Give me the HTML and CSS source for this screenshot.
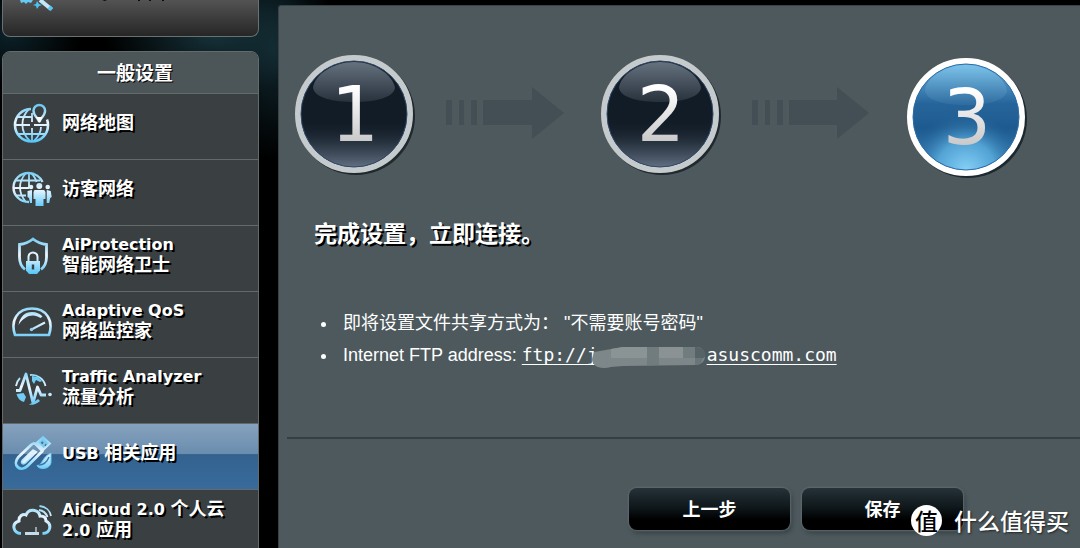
FILE: index.html
```
<!DOCTYPE html>
<html lang="zh-CN">
<head>
<meta charset="utf-8">
<title>USB 相关应用</title>
<link rel="stylesheet" href="styles.css">
</head>
<body>
<svg class="defs" aria-hidden="true">
  <defs>
    <linearGradient id="ice" x1="0" y1="0" x2="0" y2="40" gradientUnits="userSpaceOnUse">
      <stop offset="0" stop-color="#5cc4f0"/><stop offset=".5" stop-color="#eef7ff"/><stop offset="1" stop-color="#4cc3f7"/>
    </linearGradient>
    <linearGradient id="digit" x1="0" y1="0" x2="0" y2="1">
      <stop offset=".2" stop-color="#fff"/><stop offset="1" stop-color="#b9b7b9"/>
    </linearGradient>
    <linearGradient id="darkGlow" x1="0" y1="0" x2="0" y2="1">
      <stop offset=".55" stop-color="#111c27" stop-opacity="0"/><stop offset=".8" stop-color="#36424f" stop-opacity=".8"/><stop offset="1" stop-color="#626f82"/>
    </linearGradient>
    <linearGradient id="darkGloss" x1="0" y1="0" x2="0" y2="1">
      <stop offset="0" stop-color="#7c8795"/><stop offset="1" stop-color="#2c3742"/>
    </linearGradient>
    <linearGradient id="blueBall" x1="0" y1="0" x2="0" y2="1">
      <stop offset="0" stop-color="#6fbbe6"/><stop offset=".38" stop-color="#26659b"/><stop offset=".6" stop-color="#1d5a8f"/><stop offset="1" stop-color="#3c86bb"/>
    </linearGradient>
    <radialGradient id="blueGlow" cx=".5" cy="1" r=".55">
      <stop offset="0" stop-color="#85d0f6"/><stop offset=".5" stop-color="#5cafe0" stop-opacity=".8"/><stop offset="1" stop-color="#1f5f95" stop-opacity="0"/>
    </radialGradient>
    <linearGradient id="blueGloss" x1="0" y1="0" x2="0" y2="1">
      <stop offset="0" stop-color="#8fd3f5"/><stop offset="1" stop-color="#3975a5"/>
    </linearGradient>
  </defs>
</svg>

<div class="page">
  <aside class="sidebar">
    <div class="quick">
      <svg class="quick-icon" viewBox="0 0 40 12" aria-hidden="true">
        <path d="M24 0l11 9" stroke="#c4e7fa" stroke-width="4"/>
        <path d="M33 7l3 2.500" stroke="#55c6f5" stroke-width="4"/>
        <path d="M4 0h13l-2 3-3-1-2 2-2-2-3 1z" fill="#66c9f2"/>
        <path d="M21 1l2 3 3 1-3 1-2 3-1-3-3-1 3-1z" fill="#48c3f5"/>
      </svg>
      <svg class="quick-marks" viewBox="0 0 90 4" aria-hidden="true">
        <path d="M0 0h5l-2 1zM36 0h2v1h-2zM47 0h2v1h-2zM60 0h2v1h-2z" fill="#0c0c0c"/>
      </svg>
    </div>

    <nav class="menu">
      <h2 class="menu-title">一般设置</h2>
      <a class="item" href="#map">
        <svg class="icon" viewBox="0 0 40 40" fill="none" stroke="url(#ice)" stroke-width="1.800" aria-hidden="true">
          <path d="M19 6C10 6 3 13 3 22s7 16.500 16.700 16.500S36 31 36 22c0-2-.3-4-1-5.500" stroke-width="2.600"/>
          <path d="M4 22h14M22 22h13M6 14h14M6 31h27M17 6c-9 9-9 23 1 32M20 10v9M22 38c5-5 7-9 7-14M20 25v13"/>
          <path d="M27.300 19c-1-4-5.800-6-5.800-11.200a5.800 5.800 0 0 1 11.600 0C33.100 13 28.300 15 27.300 19z" fill="#3a3f41" stroke-width="2.400"/>
          <path d="M24 14h6.600l-3.300 6z" fill="#fff" stroke="none"/>
        </svg>
        <span class="label"><span class="cn">网络地图</span></span>
      </a>
      <a class="item" href="#guest">
        <svg class="icon" viewBox="0 0 40 40" fill="none" stroke="url(#ice)" stroke-width="1.800" aria-hidden="true">
          <path d="M17 33C8 33 1.500 26.500 1.500 18.500S8 4 16.500 4C23 4 28.500 8 30.500 13" stroke-width="2.400"/>
          <path d="M2 19h15M4 11.500h24M4 26.500h10M14 4c-8 9-8 20 0 29M17 4v15M19 4c3 3 5 6 5.500 9"/>
          <g fill="url(#ice)" stroke="none">
            <circle cx="27.300" cy="17" r="3"/><path d="M22.500 21h9.600l1.400 2v7h-2v7h-8v-7h-2v-7z"/>
            <circle cx="19" cy="18" r="2.300"/><path d="M15.500 22l4.500-1v13h-2l-1-5-1.500-1z"/>
            <circle cx="35.700" cy="18" r="2.300"/><path d="M34.700 21l4 1 1 6-1.500 1-1 5h-2.500z"/>
          </g>
        </svg>
        <span class="label"><span class="cn">访客网络</span></span>
      </a>
      <a class="item" href="#aiprotection">
        <svg class="icon" viewBox="0 0 40 40" fill="none" stroke="url(#ice)" aria-hidden="true">
          <path d="M13 34.500C8.500 31 7.500 27 7.500 22V9.500c5-.5 9-2 13.500-5.500 4.500 3.500 8.500 5 13.500 5.500V22c0 5-1 9-5.500 12.500" stroke-width="2.800"/>
          <path d="M16.500 27v-5a4.500 4.500 0 0 1 9 0v5" stroke-width="2"/>
          <path d="M14 26h14v9.500L25 39h-8l-3-3.500z" fill="url(#ice)" stroke="none"/>
          <path d="M21 29.500v5" stroke="#34424b" stroke-width="2.400"/>
        </svg>
        <span class="label">AiProtection<br><span class="cn">智能网络卫士</span></span>
      </a>
      <a class="item" href="#qos">
        <svg class="icon" viewBox="0 0 40 40" fill="none" stroke="url(#ice)" aria-hidden="true">
          <path d="M3 34C-2 19 6 7.500 20 7.500S42 19 37 34z" stroke-width="2.600" stroke-linejoin="round"/>
          <path d="M6.500 24c1.500-8.500 6.500-13 13.500-13 4.500 0 8 1.500 10.500 4.500l-2 1.500c-7-5-16-2.500-22 7z" fill="url(#ice)" stroke="none"/>
          <path d="M19.500 28.500L33 21.500" stroke-width="2"/><circle cx="19.500" cy="28.500" r="1.700" fill="#8cd4f5" stroke="none"/>
        </svg>
        <span class="label">Adaptive QoS<br><span class="cn">网络监控家</span></span>
      </a>
      <a class="item" href="#traffic">
        <svg class="icon" viewBox="0 0 40 40" fill="none" stroke="url(#ice)" aria-hidden="true">
          <path d="M4 23.500h4L14 7l7 29 4.500-16 3.500 8h5" stroke-width="2.800" stroke-linejoin="round"/>
          <circle cx="38" cy="27.500" r="1.800" fill="#c8e9fa" stroke="none"/>
          <path d="M18 8c7-1 14 4 15.500 11M4 19c.5-3 2-6 4-8" stroke-width="1.800"/>
          <path d="M20 9l6 1 4 4-2 1-4-2-2 4-2-3zM4.500 27l7-1 2.500 4-2 5c-4-1-6.500-4-7.500-8zM17 37.500c4 .7 8-.5 11-3.500l-2-2-4 3z" fill="#72cdf4" stroke="none"/>
        </svg>
        <span class="label">Traffic Analyzer<br><span class="cn">流量分析</span></span>
      </a>
      <a class="item active" href="#usb" aria-current="page">
        <svg class="icon" viewBox="0 0 40 40" fill="none" stroke="url(#ice)" aria-hidden="true">
          <path d="M19 12L6.500 24c-7 8 2 16 9 9l15-15-7-7c-1-1-3-.5-4.500 1z" stroke-width="2.800" stroke-linejoin="round"/>
          <path d="M21 17L10.500 27c-2.500 3 .5 5 3 3l11-11z" fill="#d9f2fd" stroke-width="1.500"/>
          <path d="M25 9.500L31 4l7 6.500-6.500 6z" fill="#7fc9ec" stroke-width="2"/><path d="M29.500 9l1.500 1.500M33 11.500l1 1" stroke="#3f6f9b" stroke-width="2"/>
          <path d="M39 20v9c0 4-4 6.500-8 6.500-3 0-5-1-6-3 6 0 4-8 14-12.500z" fill="url(#ice)" stroke="#66c9f5"/>
          <path d="M27 32c5 0 8-3 10-8" stroke="#3d78a9" stroke-width="1.400"/>
        </svg>
        <span class="label">USB <span class="cn">相关应用</span></span>
      </a>
      <a class="item" href="#aicloud">
        <svg class="icon" viewBox="0 0 40 40" fill="none" stroke="url(#ice)" aria-hidden="true">
          <path d="M9 34.500c-8-.5-10-10-2-12.500-.5-5 4-7.500 7-6 2.500-7 12.500-6 14 1 4-.5 6 2 6 5 6 3 5 12-3.500 12.500" stroke-width="3"/>
          <path d="M27 11c4 .5 7 3 8.500 7M27.500 7c6 .5 10.500 4.500 11.500 10" stroke-width="1.800"/>
          <path d="M13 34.500h14" stroke="#c4dbe9" stroke-width="3"/><path d="M24 28v5" stroke="#c4dbe9" stroke-width="1.300"/>
        </svg>
        <span class="label">AiCloud 2.0 <span class="cn">个人云</span><br>2.0 <span class="cn">应用</span></span>
      </a>
    </nav>
  </aside>

  <main class="panel">
    <div class="steps">
      <svg class="ball" viewBox="0 0 122 122" role="img" aria-label="1">
        <circle cx="61" cy="61" r="59" fill="#20292e"/>
        <circle cx="59" cy="59" r="56" fill="#111c27" stroke="#c5cacd" stroke-width="6"/>
        <circle cx="59" cy="59" r="53" fill="url(#darkGlow)" stroke="#31496b" stroke-width="1"/>
        <path d="M59 7C38 7 19 20 18 33c2 10 20 14 41 14s39-4 41-14C98 20 80 7 59 7z" fill="url(#darkGloss)" opacity=".8"/>
        <text class="num" x="60" y="86" fill="url(#digit)">1</text>
      </svg>
      <svg class="arrow" viewBox="0 0 124 122" aria-hidden="true">
        <path d="M1 45h6v25H1zM14 45h5v25h-5zM26 45h6v25h-6zM38 45h49V32l32 26-32 26V70H38z" fill="#434f54"/>
      </svg>
      <svg class="ball" viewBox="0 0 122 122" role="img" aria-label="2">
        <circle cx="61" cy="61" r="59" fill="#20292e"/>
        <circle cx="59" cy="59" r="56" fill="#111c27" stroke="#c5cacd" stroke-width="6"/>
        <circle cx="59" cy="59" r="53" fill="url(#darkGlow)" stroke="#31496b" stroke-width="1"/>
        <path d="M59 7C38 7 19 20 18 33c2 10 20 14 41 14s39-4 41-14C98 20 80 7 59 7z" fill="url(#darkGloss)" opacity=".8"/>
        <text class="num" x="60" y="86" fill="url(#digit)">2</text>
      </svg>
      <svg class="arrow" viewBox="0 0 124 122" aria-hidden="true">
        <path d="M1 45h6v25H1zM14 45h5v25h-5zM26 45h6v25h-6zM38 45h48V32l32 26-32 26V70H38z" fill="#434f54"/>
      </svg>
      <svg class="ball current" viewBox="0 0 122 122" role="img" aria-label="3">
        <circle cx="61" cy="61" r="59" fill="#1d2930"/>
        <circle cx="59" cy="59" r="56" fill="url(#blueBall)" stroke="#fff" stroke-width="6"/>
        <circle cx="59" cy="59" r="53" fill="url(#blueGlow)" stroke="#2d6ba8" stroke-width="1"/>
        <path d="M59 7C38 7 19 20 18 33c2 10 20 14 41 14s39-4 41-14C98 20 80 7 59 7z" fill="url(#blueGloss)" opacity=".5"/>
        <text class="num" x="60" y="86" fill="url(#digit)">3</text>
      </svg>
    </div>

    <h1 class="title">完成设置，立即连接。</h1>

    <ul class="notes">
      <li>即将设置文件共享方式为： "不需要账号密码"</li>
      <li>Internet FTP address: <a class="ftp" href="#ftp">ftp://j<svg class="mosaic" viewBox="0 0 116 22" aria-hidden="true">
        <path d="M3 6L32 1h74c10 0 12 18-2 18l-72 1-12 1C9 24 1 20 1 13z" fill="#7d8789"/>
        <path d="M20 3l12-2h24v11H20z" fill="#8b9495"/><path d="M68 1h24v11H68z" fill="#8a9293"/>
        <path d="M56 1h12v18H56zM92 1h12v11H92z" fill="#717c7f"/><path d="M104 1c12 0 12 11 8 11h-8z" fill="#566367"/>
        <path d="M104 12h8c-1 5-4 7-8 7z" fill="#687579"/>
      </svg>asuscomm.com</a></li>
    </ul>

    <div class="actions">
      <button class="btn" type="button">上一步</button>
      <button class="btn" type="button">保存</button>
    </div>
  </main>
</div>

<div class="watermark"><span class="seal">值</span><span>什么值得买</span></div>
</body>
</html>
```
FILE: styles.css
```
* { box-sizing: border-box; }

body {
  margin: 0;
  background:
    radial-gradient(ellipse 110px 60px at 215px 35px, #16323a, transparent),
    radial-gradient(ellipse 60px 110px at 275px 50px, #10262d, transparent),
    radial-gradient(ellipse 70px 50px at 10px 35px, #0b2128, transparent),
    #000;
  color: #fff;
  font-family: "DejaVu Sans", "Noto Sans CJK SC", sans-serif;
}

.defs { position: absolute; width: 0; height: 0; }

.page {
  display: flex;
  gap: 19px;
  height: 100vh;
  padding-left: 2px;
  overflow: hidden;
}

.sidebar { flex: 0 0 257px; }

.quick {
  display: flex;
  gap: 46px;
  height: 37px;
  margin-bottom: 14px;
  padding-left: 13px;
  border: 1px solid #6b7071;
  border-top: 0;
  border-radius: 0 0 8px 8px;
  background: linear-gradient(#535353, #262626);
}
.quick-icon { width: 40px; height: 12px; }
.quick-marks { width: 90px; height: 4px; }

.menu {
  border: 1px solid #646b6d;
  border-radius: 8px 8px 0 0;
  background: #3a3f41;
  overflow: hidden;
}
.menu-title {
  margin: 0;
  padding: 2px 0 0 9px;
  background: #4c5558;
  font-size: 19px;
  line-height: 39px;
  text-align: center;
  text-shadow: 1px 1px 0 #000;
}
.item {
  display: flex;
  align-items: center;
  gap: 10px;
  height: 66px;
  padding: 0 8px 8px 9px;
  border-top: 1px solid #636a6c;
  color: #fff;
  font-size: 16px;
  font-weight: bold;
  line-height: 20px;
  text-decoration: none;
  text-shadow: 2px 2px 0 #000;
}
.item.active { background: linear-gradient(#86a2be, #6a8dae 46%, #34628f 47%, #386b9b); }
.icon { flex: none; width: 40px; height: 40px; }
.label { padding-top: 2px; }
.cn { font-size: 18px; line-height: 20px; }

.panel {
  flex: 1;
  min-width: 0;
  margin-top: 5px;
  padding-left: 8px;
  border: solid #394246;
  border-width: 1px 0 0 1px;
  border-radius: 3px 0 0 0;
  background: #4d595d;
}
.steps {
  display: flex;
  align-items: flex-start;
  gap: 28px;
  padding: 49px 0 0 8px;
}
.ball { flex: none; width: 122px; height: 122px; }
.ball.current { margin-top: 3px; }
.arrow { flex: none; width: 124px; height: 122px; margin-right: 4px; }
.num { font: 76px "DejaVu Sans", sans-serif; text-anchor: middle; }

.title {
  margin: 36px 0 0 27px;
  font-size: 23px;
  line-height: 36px;
  text-shadow: 2px 2px 0 #000;
}
.notes {
  margin: 56px 0 0;
  padding-left: 51px;
  font: 18px/31px "Liberation Sans", "Noto Sans CJK SC", sans-serif;
}
.notes li { padding-left: 5px; }
.ftp {
  color: #fff;
  font-family: "DejaVu Sans Mono", monospace;
  text-decoration-skip-ink: none;
  text-underline-offset: 3px;
}
.mosaic { width: 116px; height: 22px; margin-left: -7px; vertical-align: -7px; }

.actions {
  display: flex;
  justify-content: flex-end;
  gap: 12px;
  margin-top: 66px;
  padding: 49px 117px 0 0;
  border-top: 2px solid #343e46;
}
.btn {
  width: 161px;
  height: 42px;
  padding: 0 0 2px;
  border: 0;
  border-radius: 8px;
  background: linear-gradient(#253238, #0d1518 50%, #000 75%);
  box-shadow: 0 0 2px 1px #626b6e, 2px 3px 4px #343e42;
  color: #fff;
  font: bold 18px "Noto Sans CJK SC", sans-serif;
}

.watermark {
  position: absolute;
  right: 11px;
  bottom: 12px;
  display: flex;
  align-items: center;
  gap: 12px;
  font: 500 23px/32px "Noto Sans CJK SC", sans-serif;
  text-shadow: 1px 1px 2px #222;
}
.seal {
  width: 31px;
  height: 31px;
  border-radius: 50%;
  background: #fff;
  color: #000;
  line-height: 30px;
  text-align: center;
  text-shadow: none;
}
```
